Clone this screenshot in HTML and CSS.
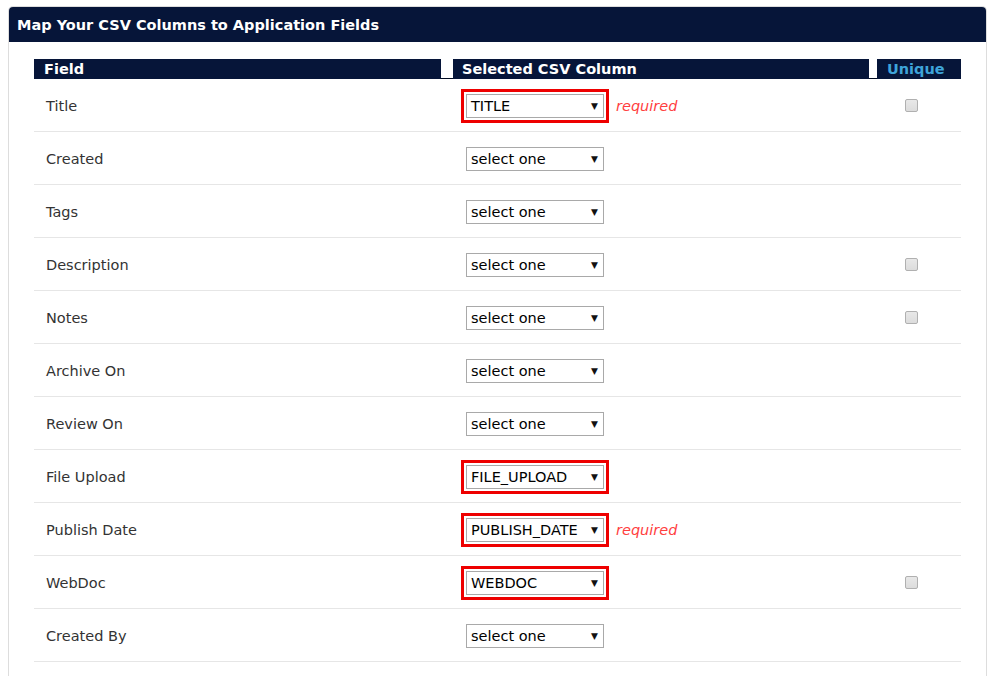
FILE: index.html
```html
<!DOCTYPE html>
<html>
<head>
<meta charset="utf-8">
<link rel="stylesheet" href="styles.css">
</head>
<body>
<div class="panel">
  <div class="panel-head">Map Your CSV Columns to Application Fields</div>
  <div class="panel-body">
    <div class="map-table">
      <div class="row head">
        <div class="th th-field">Field</div>
        <div class="th th-col">Selected CSV Column</div>
        <div class="th th-unique">Unique</div>
      </div>
      <div class="row">
        <div class="td name">Title</div>
        <div class="td pick"><span class="sel-wrap hl"><span class="sel"><span class="val">TITLE</span><span class="arr">▼</span></span></span><span class="req">required</span></div>
        <div class="td uniq"><span class="cb"></span></div>
      </div>
      <div class="row">
        <div class="td name">Created</div>
        <div class="td pick"><span class="sel-wrap"><span class="sel"><span class="val">select one</span><span class="arr">▼</span></span></span></div>
        <div class="td uniq"></div>
      </div>
      <div class="row">
        <div class="td name">Tags</div>
        <div class="td pick"><span class="sel-wrap"><span class="sel"><span class="val">select one</span><span class="arr">▼</span></span></span></div>
        <div class="td uniq"></div>
      </div>
      <div class="row">
        <div class="td name">Description</div>
        <div class="td pick"><span class="sel-wrap"><span class="sel"><span class="val">select one</span><span class="arr">▼</span></span></span></div>
        <div class="td uniq"><span class="cb"></span></div>
      </div>
      <div class="row">
        <div class="td name">Notes</div>
        <div class="td pick"><span class="sel-wrap"><span class="sel"><span class="val">select one</span><span class="arr">▼</span></span></span></div>
        <div class="td uniq"><span class="cb"></span></div>
      </div>
      <div class="row">
        <div class="td name">Archive On</div>
        <div class="td pick"><span class="sel-wrap"><span class="sel"><span class="val">select one</span><span class="arr">▼</span></span></span></div>
        <div class="td uniq"></div>
      </div>
      <div class="row">
        <div class="td name">Review On</div>
        <div class="td pick"><span class="sel-wrap"><span class="sel"><span class="val">select one</span><span class="arr">▼</span></span></span></div>
        <div class="td uniq"></div>
      </div>
      <div class="row">
        <div class="td name">File Upload</div>
        <div class="td pick"><span class="sel-wrap hl"><span class="sel"><span class="val">FILE_UPLOAD</span><span class="arr">▼</span></span></span></div>
        <div class="td uniq"></div>
      </div>
      <div class="row">
        <div class="td name">Publish Date</div>
        <div class="td pick"><span class="sel-wrap hl"><span class="sel"><span class="val">PUBLISH_DATE</span><span class="arr">▼</span></span></span><span class="req">required</span></div>
        <div class="td uniq"></div>
      </div>
      <div class="row">
        <div class="td name">WebDoc</div>
        <div class="td pick"><span class="sel-wrap hl"><span class="sel"><span class="val">WEBDOC</span><span class="arr">▼</span></span></span></div>
        <div class="td uniq"><span class="cb"></span></div>
      </div>
      <div class="row">
        <div class="td name">Created By</div>
        <div class="td pick"><span class="sel-wrap"><span class="sel"><span class="val">select one</span><span class="arr">▼</span></span></span></div>
        <div class="td uniq"></div>
      </div>
    </div>
  </div>
</div>
</body>
</html>
```
FILE: styles.css
```css
html, body {
  margin: 0;
  background: #ffffff;
}
body {
  padding: 6px 5px 0 8px;
  font-family: "DejaVu Sans", Verdana, sans-serif;
  color: #333333;
}
.panel {
  border: 1px solid #dddddd;
  border-bottom: none;
  border-radius: 5px 5px 0 0;
  height: 700px;
}
.panel-head {
  background: #061539;
  color: #ffffff;
  font-weight: bold;
  font-size: 14.5px;
  height: 35px;
  line-height: 36px;
  padding-left: 8px;
  border-radius: 4px 4px 0 0;
}
.panel-body {
  padding: 17px 24px 0 25px;
}
.map-table {
  width: 927px;
}
.row {
  display: grid;
  grid-template-columns: 419px 424px 84px;
  height: 52px;
  border-bottom: 1px solid #e6e6e6;
}
.row.head {
  height: 19px;
  border-bottom: 1px solid #000a20;
}
.th {
  background: #061539;
  color: #ffffff;
  font-weight: bold;
  font-size: 14.5px;
  line-height: 20px;
}
.th-field {
  margin-right: 12px;
  padding-left: 10px;
}
.th-col {
  margin-right: 8px;
  padding-left: 9px;
}
.th-unique {
  color: #3ea4da;
  padding-left: 10px;
}
.td {
  display: flex;
  align-items: center;
  font-size: 14.5px;
  padding-top: 1px;
}
.name {
  padding-left: 12px;
  color: #333333;
}
.pick {
  padding-left: 8px;
}
.sel-wrap {
  display: inline-flex;
  border: 3px solid transparent;
  padding: 2px;
}
.sel-wrap.hl {
  border-color: #ee0000;
}
.sel {
  display: flex;
  align-items: center;
  justify-content: space-between;
  box-sizing: border-box;
  width: 138px;
  height: 24px;
  border: 1px solid #a9a9a9;
  background: #ffffff;
  padding: 0 5px 0 4px;
  color: #000000;
  font-size: 14.5px;
}
.arr {
  font-size: 9px;
  color: #111111;
}
.req {
  margin-left: 7px;
  color: #ff4040;
  font-style: italic;
  font-size: 14.5px;
}
.uniq {
  justify-content: center;
  padding-right: 16px;
}
.cb {
  display: inline-block;
  box-sizing: border-box;
  width: 13px;
  height: 13px;
  border: 1px solid #b0b0b0;
  border-radius: 2px;
  background: linear-gradient(#e8e8e8, #dcdcdc);
}
```
